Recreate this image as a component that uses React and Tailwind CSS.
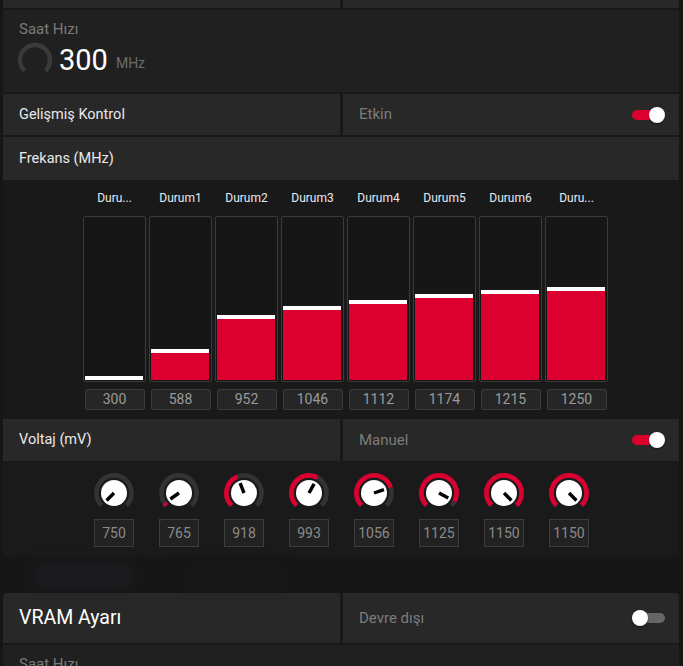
import React from "react";

const bars = [
  { label: "Duru...", value: 300, h: 4 },
  { label: "Durum1", value: 588, h: 31 },
  { label: "Durum2", value: 952, h: 65 },
  { label: "Durum3", value: 1046, h: 74 },
  { label: "Durum4", value: 1112, h: 80 },
  { label: "Durum5", value: 1174, h: 86 },
  { label: "Durum6", value: 1215, h: 90 },
  { label: "Duru...", value: 1250, h: 93 },
];

const volts = [750, 765, 918, 993, 1056, 1125, 1150, 1150];

function polar(cx, cy, r, a) {
  const rad = (a * Math.PI) / 180;
  return [cx + r * Math.cos(rad), cy + r * Math.sin(rad)];
}

function arcPath(cx, cy, r, a0, a1) {
  const [x0, y0] = polar(cx, cy, r, a0);
  const [x1, y1] = polar(cx, cy, r, a1);
  const large = a1 - a0 > 180 ? 1 : 0;
  return `M ${x0} ${y0} A ${r} ${r} 0 ${large} 1 ${x1} ${y1}`;
}

function Knob({ value }) {
  const f = Math.max(0, Math.min(1, (value - 750) / 400));
  const end = 135 + 270 * f;
  const [px, py] = polar(20, 20, 10.5, end);
  return (
    <svg width="40" height="40" viewBox="0 0 40 40">
      <path d={arcPath(20, 20, 17.6, 135, 405)} fill="none" stroke="#333333" strokeWidth="4.6" />
      {f > 0 && (
        <path d={arcPath(20, 20, 17.6, 135, end)} fill="none" stroke="#dc0030" strokeWidth="4.6" />
      )}
      <circle cx="20" cy="20" r="13" fill="#ffffff" />
      <line x1="20" y1="20" x2={px} y2={py} stroke="#000000" strokeWidth="3.4" />
    </svg>
  );
}

function Toggle({ on }) {
  return on ? (
    <div className="relative w-[33px] h-[16px]">
      <div className="absolute left-0 top-[3px] w-[26px] h-[10px] rounded-full bg-[#dc0030]" />
      <div className="absolute right-0 top-0 w-[16px] h-[16px] rounded-full bg-white shadow-[0_1px_2px_rgba(0,0,0,0.5)]" />
    </div>
  ) : (
    <div className="relative w-[33px] h-[16px]">
      <div className="absolute right-0 top-[3px] w-[26px] h-[10px] rounded-full bg-[#666666]" />
      <div className="absolute left-0 top-0 w-[16px] h-[16px] rounded-full bg-white shadow-[0_1px_2px_rgba(0,0,0,0.5)]" />
    </div>
  );
}

function SplitRow({ left, right, on, h = "h-[41px]", leftClass = "text-[14.5px] text-[#e8e8e8]" }) {
  return (
    <div className={`grid grid-cols-[337px_1fr] gap-[3px] ${h}`}>
      <div className={`bg-[#282828] flex items-center pl-[16px] ${leftClass}`}>{left}</div>
      <div className="bg-[#282828] flex items-center justify-between pl-[16px] pr-[14px]">
        <span className="text-[15px] text-[#7c7c7c]">{right}</span>
        <Toggle on={on} />
      </div>
    </div>
  );
}

export default function App() {
  return (
    <div className="w-[683px] h-[666px] overflow-hidden bg-[#161616] pl-[3px] pr-[4px] font-['Roboto','Liberation_Sans',sans-serif] relative">
      {/* Card 1 */}
      <div className="flex flex-col gap-[2px] bg-[#181818] rounded-b-[4px]">
        <div className="grid grid-cols-[337px_1fr] gap-[3px] h-[8px]">
          <div className="bg-[#282828]" />
          <div className="bg-[#282828]" />
        </div>

        <div className="h-[82px] bg-[#202020] pl-[16px] pt-[9px]">
          <div className="text-[15px] leading-[20px] text-[#7a7a7a]">Saat Hızı</div>
          <div className="flex items-center mt-[3px] -ml-[2px]">
            <svg width="36" height="36" viewBox="0 0 36 36">
              <path d={arcPath(18, 18, 15, 135, 405)} fill="none" stroke="#3a3a3a" strokeWidth="4.4" />
            </svg>
            <span className="ml-[6px] text-[29px] leading-[34px] text-white">300</span>
            <span className="ml-[8px] mt-[6px] text-[14px] text-[#6c6c6c]">MHz</span>
          </div>
        </div>

        <SplitRow left="Gelişmiş Kontrol" right="Etkin" on />

        <div className="flex flex-col">
          <div className="h-[43px] bg-[#282828] flex items-center pl-[16px] text-[14.5px] text-[#e8e8e8]">
            Frekans (MHz)
          </div>
          <div className="h-[239px] bg-[#191919] pt-[10px]">
            <div className="flex gap-[3px] ml-[80px]">
              {bars.map((b, i) => (
                <div key={i} className="w-[63px] flex flex-col items-center">
                  <div className="h-[16px] leading-[16px] text-[12px] text-[#e6eaf0]">{b.label}</div>
                  <div className="mt-[10px] w-[63px] h-[166px] border border-[#3a3a3a] rounded-[2px] bg-[#161616] p-[1px] pr-[2px] pb-[1px] flex flex-col justify-end">
                    <div className="w-full flex flex-col" style={{ height: b.h }}>
                      <div className="h-[4px] bg-white shrink-0" />
                      <div className="flex-1 bg-[#dc0030]" />
                    </div>
                  </div>
                  <div className="mt-[7px] w-[60px] h-[21px] border border-[#3a3a3a] rounded-[2px] bg-[#262626] flex items-center justify-center text-[14px] text-[#9a9a9a]">
                    {b.value}
                  </div>
                </div>
              ))}
            </div>
          </div>
        </div>

        <div className="flex flex-col -mt-[2px]">
          <SplitRow left="Voltaj (mV)" right="Manuel" on h="h-[42px]" />
          <div className="h-[95px] bg-[#1a1a1a] rounded-b-[4px] pt-[12px]">
            <div className="flex gap-[25px] ml-[91px]">
              {volts.map((v, i) => (
                <div key={i} className="w-[40px] flex flex-col items-center">
                  <Knob value={v} />
                  <div className="mt-[6px] w-[40px] h-[28px] border border-[#3c3c3c] bg-[#222222] flex items-center justify-center text-[14px] text-[#8a8a8a]">
                    {v}
                  </div>
                </div>
              ))}
            </div>
          </div>
        </div>
      </div>

      {/* blurred background shapes */}
      <div className="h-[37px] relative">
        <div className="absolute left-[30px] top-[6px] w-[100px] h-[28px] bg-[#1e1f25] blur-[6px] opacity-60" />
        <div className="absolute left-[180px] top-[10px] w-[100px] h-[24px] bg-[#1b1b1c] blur-[8px] opacity-40" />
      </div>

      {/* Card 2 */}
      <div className="flex flex-col gap-[2px] bg-[#181818] rounded-t-[4px] overflow-hidden">
        <SplitRow
          left="VRAM Ayarı"
          right="Devre dışı"
          on={false}
          h="h-[50px]"
          leftClass="text-[19.5px] text-white"
        />
        <div className="h-[40px] bg-[#202020] pl-[16px] pt-[9px]">
          <div className="text-[15px] leading-[20px] text-[#7a7a7a]">Saat Hızı</div>
        </div>
      </div>
    </div>
  );
}
